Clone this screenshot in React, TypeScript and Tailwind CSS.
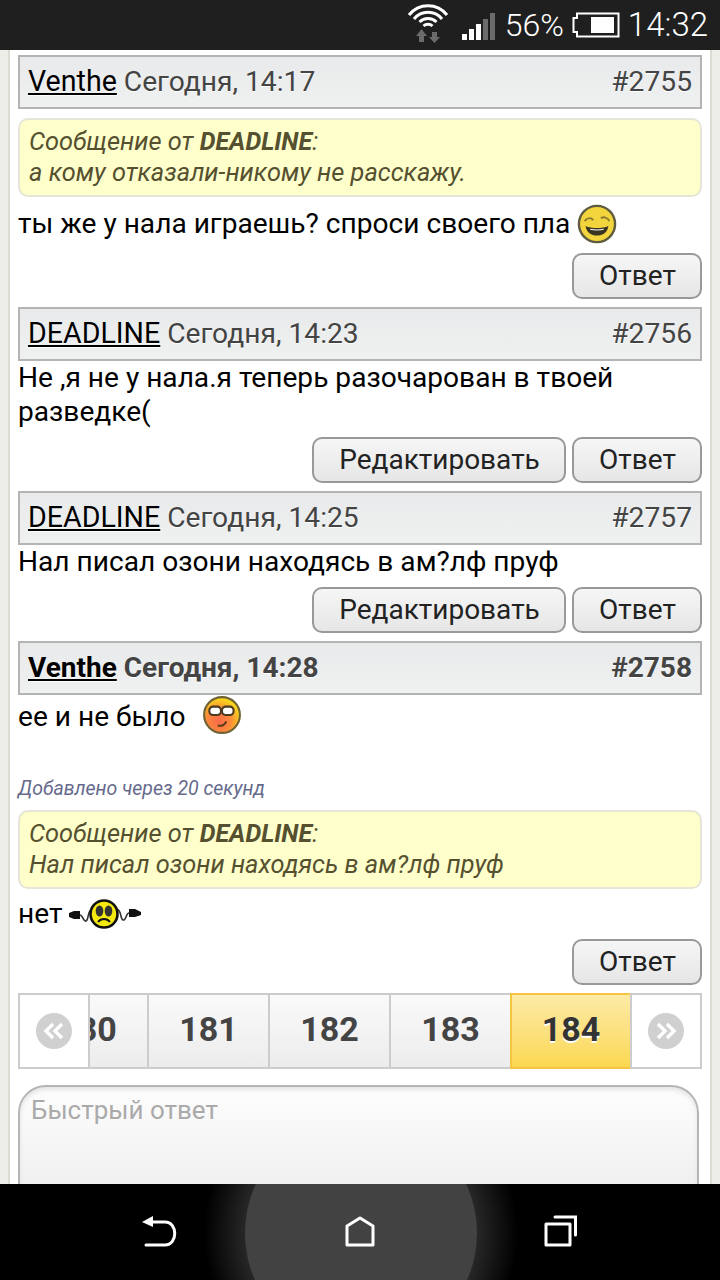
const Wifi = () => (
  <svg width="42" height="46" viewBox="0 0 42 46" fill="none">
    <path d="M2 13A24 24 0 0 1 40 13" stroke="#fff" strokeWidth="3" />
    <path d="M7 17A18 18 0 0 1 35 17" stroke="#fff" strokeWidth="3" />
    <path d="M12.5 20A12 12 0 0 1 29.5 20" stroke="#fff" strokeWidth="3" />
    <path d="M16.5 24A6.5 6.5 0 0 1 25.5 24" stroke="#fff" strokeWidth="3" />
    <path d="M14.5 27l5.5 7h-3v6h-5v-6H9z" fill="#6b6b6b" />
    <path d="M25 30h5v5h3l-5.500 6-5.500-6h3z" fill="#6b6b6b" />
  </svg>
);

const Signal = () => (
  <div className="flex items-end gap-[2px] h-[27px]">
    <div className="w-[5px] h-[6px] bg-white" />
    <div className="w-[5px] h-[11px] bg-white" />
    <div className="w-[5px] h-[16px] bg-white" />
    <div className="w-[5px] h-[21px] bg-[#6b6b6b]" />
    <div className="w-[5px] h-[27px] bg-[#6b6b6b]" />
  </div>
);

const Battery = () => (
  <svg width="48" height="26" viewBox="0 0 48 26" fill="none">
    <path d="M5 1.5h41.5v23H5V20H1.5V6H5z" stroke="#fff" strokeWidth="2" />
    <rect x="19" y="5" width="23" height="16" fill="#fff" />
  </svg>
);

const SmileWink = () => (
  <svg width="40" height="40" viewBox="0 0 42 42" className="inline-block align-middle blur-[0.5px]">
    <circle cx="21" cy="21" r="19" fill="#f2d43c" stroke="#5f5b40" strokeWidth="2.5" />
    <path d="M8 18c3-4 7-4 9-1M25 15c3-2 7-1 9 3" stroke="#8a7a30" strokeWidth="2" fill="none" />
    <path d="M9 23c6 3 18 3 24 0-1 7-6 10-12 10S10 30 9 23z" fill="#3a3423" />
    <path d="M14 26c4 1 10 1 14 0v1c-4 1-10 1-14 0z" fill="#fff" />
  </svg>
);

const SmileCool = () => (
  <svg width="40" height="40" viewBox="0 0 38 38" className="inline-block align-middle blur-[0.5px]">
    <defs>
      <radialGradient id="cool" cx="40%" cy="68%" r="62%">
        <stop offset="0%" stopColor="#fb6a4a" />
        <stop offset="55%" stopColor="#fa8a3c" />
        <stop offset="100%" stopColor="#f8d21d" />
      </radialGradient>
    </defs>
    <circle cx="19" cy="19" r="17" fill="url(#cool)" stroke="#6f6234" strokeWidth="2" />
    <rect x="7" y="11" width="11" height="8" rx="3.5" fill="#fff" stroke="#4b3a20" strokeWidth="2" />
    <rect x="19" y="11" width="11" height="8" rx="3.5" fill="#fff" stroke="#4b3a20" strokeWidth="2" />
    <path d="M15 29c4 1 7-1 8-4" stroke="#5b3a18" strokeWidth="2" fill="none" />
  </svg>
);

const SmileSad = () => (
  <svg width="72" height="34" viewBox="0 0 72 34" className="inline-block align-middle">
    <path d="M0 16l5-2h6v8H5l-5-2z" fill="#111" />
    <path d="M60 12h6l6 3v3l-6 2h-6z" fill="#111" />
    <path d="M11 18c3 0 3 7 6 6 3-1 1-10 6-12M60 16c-3 0-3 8-6 7-3-1-1-9-6-11" stroke="#333" strokeWidth="1.6" fill="none" />
    <circle cx="35" cy="17" r="13.500" fill="#f5ea10" stroke="#111" strokeWidth="2.600" />
    <ellipse cx="30.500" cy="14" rx="3.800" ry="5.500" fill="#333" />
    <ellipse cx="39.500" cy="14" rx="3.800" ry="5.500" fill="#333" />
    <path d="M29 25c3-4 9-4 12 0" stroke="#111" strokeWidth="2" fill="none" />
  </svg>
);

const Arrows = ({ dir }: { dir: "left" | "right" }) => (
  <svg width="36" height="36" viewBox="0 0 36 36" className="blur-[0.4px]">
    <circle cx="18" cy="18" r="18" fill="#d0d0d0" />
    {dir === "left" ? (
      <path d="M17 11l-7 7 7 7M26 11l-7 7 7 7" stroke="#fff" strokeWidth="3.4" fill="none" />
    ) : (
      <path d="M10 11l7 7-7 7M19 11l7 7-7 7" stroke="#fff" strokeWidth="3.4" fill="none" />
    )}
  </svg>
);

const PostHead = ({ user, date, num, bold }: { user: string; date: string; num: string; bold?: boolean }) => (
  <div
    className={`h-[54px] flex items-center justify-between border-2 border-[#b4b4b4] bg-gradient-to-b from-[#e9eaeb] to-[#eff0f0] pl-[8px] pr-[8px] text-[#444] [text-shadow:0_1px_0_#fff] ${
      bold ? "font-bold text-[28px]" : "text-[28.2px]"
    }`}
  >
    <div className="whitespace-nowrap">
      <span className={`text-black underline underline-offset-[2px] decoration-2 ${bold ? "" : "text-[28.6px]"}`}>
        {user}
      </span>{" "}
      {date}
    </div>
    <span>{num}</span>
  </div>
);

const Quote = ({ lines, className = "" }: { lines: string; className?: string }) => (
  <div
    className={`h-[79px] rounded-[10px] border-2 border-[#e6e6d8] bg-[#ffffcc] px-[9px] pt-[6px] text-[25.4px] leading-[30px] italic text-[#55502f] ${className}`}
  >
    <div>
      Сообщение от <b className="text-[25px]">DEADLINE</b>:
    </div>
    <div>{lines}</div>
  </div>
);

const Btn = ({ label, w }: { label: string; w: string }) => (
  <div
    className={`${w} h-[46px] flex items-center justify-center pl-[1px] rounded-[10px] border-2 border-[#999] bg-gradient-to-b from-[#f6f6f6] to-[#e6e6e6] text-[28px] text-[#222]`}
  >
    {label}
  </div>
);

const Actions = ({ edit }: { edit?: boolean }) => (
  <div className="flex justify-end gap-[6px]">
    {edit && <Btn label="Редактировать" w="w-[254px]" />}
    <Btn label="Ответ" w="w-[130px]" />
  </div>
);

const Page = ({ n, active }: { n: string; active?: boolean }) => (
  <div
    className={`shrink-0 h-full flex items-center justify-center pb-[3px] text-[34px] font-bold border-l-2 border-y-2 ${
      active
        ? "w-[120px] border-[#f5c542] bg-gradient-to-b from-[#fdeaa5] to-[#fbd84f] text-[#333] [text-shadow:0_2px_0_#fff]"
        : "w-[121px] border-[#cccccc] bg-gradient-to-b from-[#fafafa] to-[#ececec] text-[#444]"
    }`}
  >
    {n}
  </div>
);

export default function App() {
  return (
    <div className="w-[720px] h-[1280px] flex flex-col overflow-hidden font-['Roboto',sans-serif] bg-white">
      {/* статус-бар */}
      <div className="h-[50px] shrink-0 bg-[#1f1f1f] flex items-center justify-end pr-[12px] text-white text-[32px] font-light">
        <div className="mr-[13px]">
          <Wifi />
        </div>
        <div className="mr-[10px] mt-[3px]">
          <Signal />
        </div>
        <span className="mr-[8px]">56%</span>
        <div className="mr-[8px]">
          <Battery />
        </div>
        <span className="text-[33px]">14:32</span>
      </div>

      {/* контент */}
      <div className="flex-1 min-h-0 overflow-hidden bg-[#eeeee8]">
        <div className="ml-[8px] w-[704px] h-full border-x-2 border-[#dcdcd4] bg-white pl-[8px] pt-[5px]">
          <div className="w-[684px] text-[28.1px] text-black">
            <PostHead user="Venthe" date="Сегодня, 14:17" num="#2755" />
            <Quote className="mt-[9px]" lines="а кому отказали-никому не расскажу." />
            <div className="h-[56px] pb-[2px] flex items-center whitespace-nowrap">
              ты же у нала играешь? спроси своего пла&nbsp;
              <SmileWink />
            </div>
            <Actions />

            <div className="mt-[8px]">
              <PostHead user="DEADLINE" date="Сегодня, 14:23" num="#2756" />
            </div>
            <div className="leading-[34px] pb-[8px]">
              Не ,я не у нала.я теперь разочарован в твоей разведке(
            </div>
            <Actions edit />

            <div className="mt-[8px]">
              <PostHead user="DEADLINE" date="Сегодня, 14:25" num="#2757" />
            </div>
            <div className="leading-[34px] pb-[8px]">Нал писал озони находясь в ам?лф пруф</div>
            <Actions edit />

            <div className="mt-[8px]">
              <PostHead user="Venthe" date="Сегодня, 14:28" num="#2758" bold />
            </div>
            <div className="h-[44px] flex items-center whitespace-pre">
              ее и не было
              <span className="ml-[16px] mb-[4px] flex">
                <SmileCool />
              </span>
            </div>
            <div className="mt-[36px] h-[27px] text-[19.5px] leading-[27px] italic text-[#656a8c]">
              Добавлено через 20 секунд
            </div>
            <Quote className="mt-[8px]" lines="Нал писал озони находясь в ам?лф пруф" />
            <div className="h-[50px] flex items-center whitespace-pre">
              нет <SmileSad />
            </div>
            <Actions />

            {/* пагинация */}
            <div className="mt-[8px] h-[76px] flex">
              <div className="w-[72px] shrink-0 flex items-center justify-center border-2 border-[#cccccc] bg-white">
                <Arrows dir="left" />
              </div>
              <div className="w-[540px] h-full flex justify-end overflow-hidden">
                <Page n="180" />
                <Page n="181" />
                <Page n="182" />
                <Page n="183" />
                <Page n="184" active />
              </div>
              <div className="flex-1 flex items-center justify-center border-2 border-[#cccccc] bg-white">
                <Arrows dir="right" />
              </div>
            </div>

            {/* быстрый ответ */}
            <div className="mt-[16px] w-[681px] h-[200px] rounded-t-[28px] border-2 border-[#b5b5b5] bg-gradient-to-b from-[#fdfdfd] to-[#f0f0f0] to-50% shadow-[inset_0_3px_4px_#e4e4e4] px-[11px] pt-[4px] text-[26px] text-[#aaaaaa]">
              Быстрый ответ
            </div>
          </div>
        </div>
      </div>

      {/* навигация */}
      <div className="relative h-[96px] shrink-0 overflow-hidden bg-black">
        <div className="absolute left-[204px] top-[-108px] w-[314px] h-[314px] rounded-full bg-[radial-gradient(circle_closest-side,#282828_73%,#000000_100%)]" />
        <div className="absolute left-[245px] top-[-67px] w-[232px] h-[232px] rounded-full bg-[#424242]" />
        <svg width="36" height="36" viewBox="0 0 36 36" fill="none" className="absolute left-[141px] top-[32px]">
          <path d="M8 6h16c13 0 13 23 0 23H5" stroke="#fff" strokeWidth="3" strokeLinecap="round" />
          <path d="M1 6l11-6v11z" fill="#fff" />
        </svg>
        <svg width="32" height="34" viewBox="0 0 32 34" fill="none" className="absolute left-[344px] top-[31px]">
          <path d="M3 11L16 3 29 11v19H3z" stroke="#fff" strokeWidth="3" strokeLinejoin="round" />
        </svg>
        <svg width="34" height="34" viewBox="0 0 34 34" fill="none" className="absolute left-[544px] top-[30px]">
          <rect x="2" y="10" width="24" height="21" stroke="#fff" strokeWidth="3" strokeLinejoin="round" />
          <path d="M11 3h20.5v18" stroke="#fff" strokeWidth="3" strokeLinecap="round" />
        </svg>
      </div>
    </div>
  );
}
